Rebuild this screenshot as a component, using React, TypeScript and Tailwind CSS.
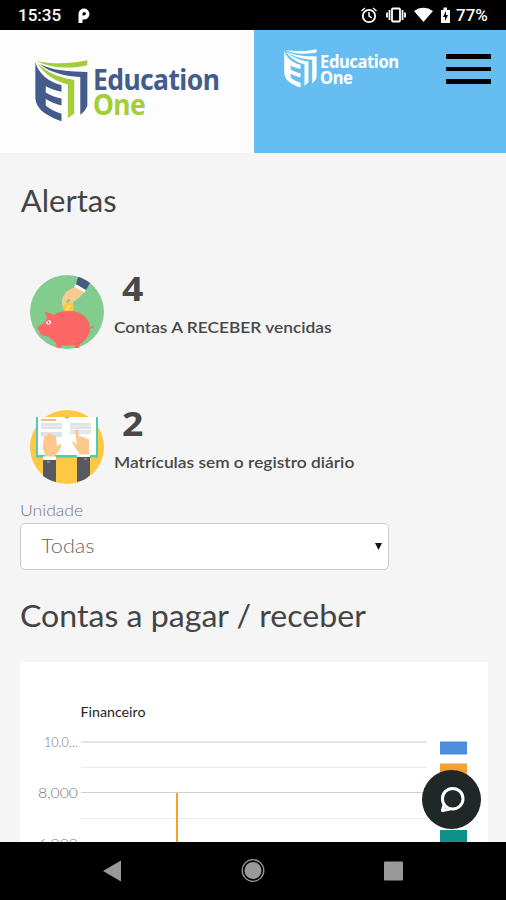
import type { ReactNode } from "react";

type LogoProps = {
  light?: boolean;
  className: string;
};

type AlertRowProps = {
  icon: ReactNode;
  count: number;
  children: ReactNode;
};

function LogoMark({ light, className }: LogoProps) {
  const blue = light ? "#ffffff" : "#435b8d";
  const green = light ? "#ffffff" : "#a3cd39";

  return (
    <svg viewBox="105 181 158 187" preserveAspectRatio="none" className={className}>
      <path fill={green} d="M108 184C155 194 210 193 261 182V197C212 209 154 206 108 184Z" />
      <path fill={blue} d="M118 193C158 214 210 215 261 217V318C257 330 250 338 240 346V232C198 230 150 220 118 193Z" />
      <path fill={green} d="M112 191C145 224 185 235 222 241V342L203 357V255C165 245 132 225 112 191Z" />
      <path
        fill={blue}
        d="M106 187C115 222 145 247 184 257V277C166 273 151 268 137 260V279C151 288 167 294 184 297V318C166 314 151 308 137 299V318C151 330 167 338 184 343V366C142 350 106 331 106 292Z"
      />
    </svg>
  );
}

function PiggyIcon() {
  return (
    <svg viewBox="0 0 74 74" className="h-[74px] w-[74px]">
      <circle cx="37" cy="37" r="37" fill="#82cc8e" />
      <path fill="#fff" d="m46 9 10 6-2 3-10-6Z" />
      <path fill="#475a80" d="M48 2c5 1 9 4 12 6l-4 7-10-6Z" />
      <path
        fill="#f6cc93"
        d="M45 12c-5 2-9 4-11 8-3 4-2 10-1 13l8-1 3-6c5-2 7-5 10-9Z"
      />
      <path fill="#82cc8e" d="M36 28c0-3 2-4 4-4 0 3-1 4-4 5Z" />
      <circle cx="38.500" cy="32.500" r="5.300" fill="#fdc93f" />
      <path d="m39.500 30-2.500 5" stroke="#fff1b5" strokeWidth="1.300" />
      <path
        fill="#fd6765"
        d="M15 37c3 0 7 2 8 3 5-3 10-4 16-4 12 0 21 7 21 17 0 7-5 13-10 16l-1 4h-4l-1-3c-4 1-9 1-12 0l-1 3h-4l-1-5c-4-3-6-6-10-7-4 0-7-2-6-5-3-1-3-3-1-5 3-2 7-4 8-8Z"
      />
      <path d="M59 53c2 0 4 0 4-2" fill="none" stroke="#fd6765" strokeWidth="1.500" />
      <path fill="#e95759" d="M59 57c-3 8-9 12-18 12 8 1 15-3 18-12Z" />
      <path d="M16 47a2.500 2.500 0 0 0 5 0c0-2-3-2-3-1Z" fill="#fff" />
      <circle cx="18.500" cy="47.500" r="1" fill="#a34f52" />
    </svg>
  );
}

function BookIcon() {
  return (
    <svg viewBox="0 0 74 74" className="h-[74px] w-[74px]">
      <circle cx="37" cy="37" r="37" fill="#fec843" />
      <path fill="#4fcbb0" d="M6 7h62v40.500H6Z" />
      <path fill="#fff" d="M8 7h26l3 1.500L40 7h26v38H8Z" />
      <path fill="#ffbe76" d="M11 9h15v2H11Z" />
      <path fill="#dde3e6" d="M11 13h21v6H11Zm0 9h21v5H11Zm29-9h21v6H40Zm0 7h21v4H40Z" />
      <path stroke="#eef1f2" d="M11 16h21M40 16h21M40 22h21" />
      <path
        fill="#fec88b"
        d="M15 47l-1-6c-2-3-1-8 0-13 0-2 3-2 3-1 0-3 1-4 2.500-4S22 24 22 26c1-2 4-1 4 1l1 10 2-2c2-1 3 0 2 2-2 4-4 7-6 8v2Z"
      />
      <path
        fill="#fec88b"
        d="M59 45V31c0-3-3-3-3-1 0-3-3-4-4-2 0-2-2-2-3-1l-1-6c0-2-3-2-3 0l2 14-3-3c-2-1-2 0-1 2l6 9v2Z"
      />
      <path fill="#fff" d="M13 46.500h13V50H13Zm34-2h13V47H47Z" />
      <path fill="#555a60" d="M13 50h13v22c-5-1-9-3-13-6ZM47 47h13v18c-4 4-8 6-13 7Z" />
      <path d="M17 52h3m34-3h3" stroke="#aeb5b9" />
    </svg>
  );
}

function AlertRow({ icon, count, children }: AlertRowProps) {
  return (
    <div className="flex h-[135px] pl-[30px]">
      {icon}
      <div className="pl-[10px]">
        <div className="ml-[8px] mt-[-11px] h-[48px] w-[30px] origin-left scale-x-110 font-['Open_Sans'] text-[34px] font-bold leading-[48px] text-[#484848]">
          {count}
        </div>
        <p className="h-[28px] w-max origin-left scale-x-[1.155] whitespace-nowrap text-[15px] font-semibold leading-[31px] text-[#484848]">
          {children}
        </p>
      </div>
    </div>
  );
}

function StatusBar() {
  return (
    <div className="flex h-[30px] shrink-0 items-center bg-black pl-[18px] pr-[17px] font-['Roboto'] text-[17px] font-medium text-white">
      <span className="w-[45px] leading-[32px]">15:35</span>
      <svg viewBox="0 0 14 16" className="ml-[14px] mt-[2px] h-[16px] w-[14px]">
        <path d="M3.500 15V5.500a3.500 3.500 0 1 1 3.500 4H4" fill="none" stroke="#fff" strokeWidth="4" />
        <circle cx="7.500" cy="5.500" r="1.300" fill="#000" />
      </svg>
      <svg viewBox="0 0 92 18" className="ml-auto h-[18px] w-[92px]">
        <g fill="none" stroke="#fff" strokeWidth="1.800">
          <circle cx="9" cy="10" r="6.200" />
          <path d="M9 6v4l3 2M1.500 5 5 2m8 0 3.500 3" strokeWidth="1.500" />
          <rect x="32" y="2.500" width="8" height="13" rx="1" />
          <path d="M29.500 4v10M42.500 4v10M27 6.500v5M45 6.500v5" strokeWidth="1.800" />
        </g>
        <path fill="#fff" d="M54 5c6-4.500 13-4.500 19 0l-9.500 11ZM81 4h2.500V1.500h3.500V4h3v13h-9Z" />
        <path fill="#000" d="m86 5-3 6h2v4l3-6h-2Z" />
      </svg>
      <span className="ml-[4px] w-[33px] text-[17px] leading-[32px]">77%</span>
    </div>
  );
}

function Header() {
  return (
    <header className="flex h-[123px] shrink-0">
      <div className="flex w-[253.500px] items-start bg-[#fdfdfd] pl-[35px] pt-[30px]">
        <LogoMark className="h-[62px] w-[53px] shrink-0" />
        <div className="ml-[5px] mt-[7px] origin-left scale-x-[0.945] font-['Noto_Sans'] text-[28px] font-bold leading-[25px] tracking-[-0.6px] text-[#435b8d]">
          <div>Education</div>
          <div className="text-[#a3cd39]">One</div>
        </div>
      </div>
      <div className="flex flex-1 items-start bg-[#65bdf1] pl-[30px] pt-[19px]">
        <LogoMark light className="h-[39px] w-[33px] shrink-0" />
        <div className="ml-[3px] mt-[5px] w-[80px] origin-left scale-x-[0.945] font-['Noto_Sans'] text-[17.500px] font-bold leading-[15.500px] tracking-[-0.4px] text-white">
          <div>Education</div>
          <div>One</div>
        </div>
        <div className="ml-auto mr-[15px] mt-[5px] flex w-[45px] flex-col gap-[8px]">
          <div className="h-[4.500px] bg-black"></div>
          <div className="h-[4.500px] bg-black"></div>
          <div className="h-[4.500px] bg-black"></div>
        </div>
      </div>
    </header>
  );
}

function FinanceChart() {
  return (
    <svg viewBox="0 0 468 180" className="h-[180px] w-[468px] font-['Lato']">
      <text x="60.500" y="55" fontSize="13" fill="#222" textLength="65" lengthAdjust="spacingAndGlyphs">
        Financeiro
      </text>
      <g fill="#777" fontSize="14" fontWeight="300">
        <text x="24" y="85" textLength="34" lengthAdjust="spacingAndGlyphs">10.0…</text>
        <text x="18" y="136" textLength="40" lengthAdjust="spacingAndGlyphs">8,000</text>
        <text x="18" y="187" textLength="40" lengthAdjust="spacingAndGlyphs">6,000</text>
      </g>
      <g fill="none">
        <path d="M61 80h346" stroke="#e4e4e4" strokeWidth="2" />
        <path d="M61 105.500h346M61 156.500h346" stroke="#ebebeb" />
        <path d="M61 130.500h346" stroke="#cfcfcf" />
      </g>
      <path fill="#f8a326" d="M156 131h2v49h-2Z" />
      <path fill="#4e8ddb" d="M420 79.500h27v13h-27Z" />
      <path fill="#f3a136" d="M420 101.500h27v13h-27Z" />
      <path fill="#12918b" d="M420 168h27v12h-27Z" />
    </svg>
  );
}

export default function App() {
  return (
    <div className="relative flex h-[900px] w-[506px] flex-col overflow-hidden bg-[#f5f5f5] font-['Lato',sans-serif]">
      <StatusBar />
      <Header />

      <main className="flex h-[689px] flex-col overflow-hidden">
        <h1 className="h-[122px] w-max origin-left scale-x-[1.035] pl-[20px] pt-[27px] text-[30px] leading-[40px] text-[#444]">
          Alertas
        </h1>
        <AlertRow icon={<PiggyIcon />} count={4}>Contas A RECEBER vencidas</AlertRow>
        <div className="h-[90px]">
          <AlertRow icon={<BookIcon />} count={2}>Matrículas sem o registro diário</AlertRow>
        </div>

        <div className="px-[20px]">
          <label className="block h-[23px] w-max origin-left scale-x-[1.1] text-[16px] font-light leading-[20px] text-[#777]">
            Unidade
          </label>
          <div className="flex h-[47px] w-[369px] items-center justify-between rounded-[5px] border border-[#c8cbce] bg-white pl-[20px] pr-[6px] text-[19px] font-light text-[#666]">
            <span className="origin-left scale-x-[1.14]">Todas</span>
            <svg viewBox="0 0 7 7" className="h-[7px] w-[7px]">
              <path d="M0 0h7L3.500 7Z" fill="#101520" />
            </svg>
          </div>
          <h2 className="h-[92px] w-max origin-left scale-x-[1.07] whitespace-nowrap pt-[25px] text-[30px] leading-[40px] text-[#444]">
            Contas a pagar / receber
          </h2>
          <div className="h-[180px] w-[468px] bg-white">
            <FinanceChart />
          </div>
        </div>
      </main>

      <button className="absolute left-[422px] top-[770px] flex h-[59px] w-[59px] items-center justify-center rounded-full bg-[#202827]">
        <svg viewBox="0 0 28 28" className="h-[28px] w-[28px]">
          <g fill="none" stroke="#fff" strokeWidth="3" strokeLinejoin="round">
            <circle cx="14.700" cy="12.700" r="10.300" />
            <path d="M6 18.500 4.500 24.500 12 23" />
          </g>
        </svg>
      </button>

      <nav className="flex h-[58px] shrink-0 items-center bg-black">
        <svg viewBox="0 0 506 58" className="h-[58px] w-[506px]" fill="#999">
          <path d="M103 29 121 18.500v21Z" />
          <circle cx="253" cy="28.500" r="8.500" />
          <circle cx="253" cy="28.500" r="10.800" fill="none" stroke="#999" strokeWidth="1.300" />
          <rect x="384" y="19.500" width="19" height="19" rx="1" />
        </svg>
      </nav>
    </div>
  );
}
